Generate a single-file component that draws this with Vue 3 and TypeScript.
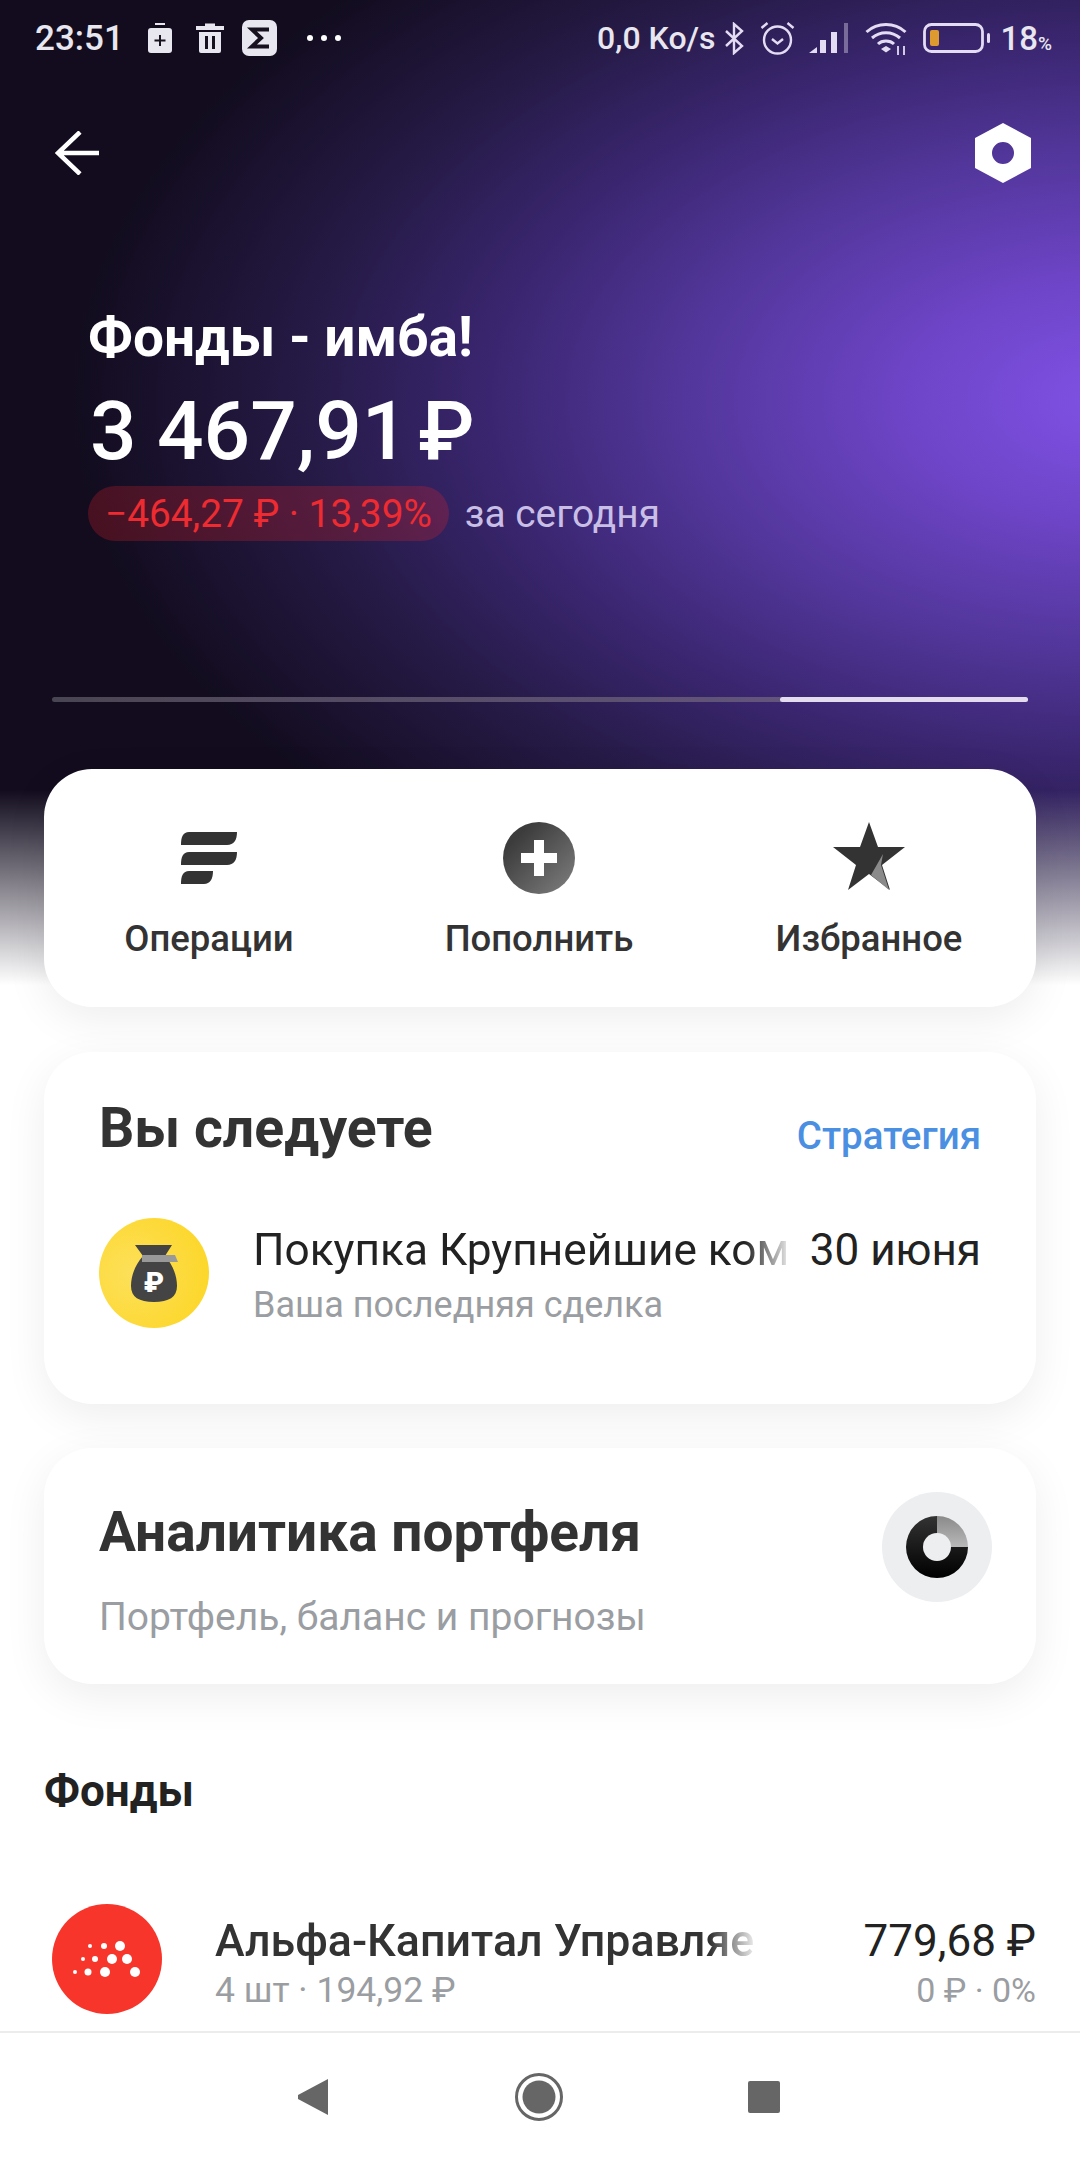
<template>
  <div class="screen">
    <div class="hero-bg"></div>

    <main class="content">
      <!-- status bar -->
      <header class="status">
        <div class="status-left">
          <span class="clock">23:51</span>
          <svg class="st-ic" width="24" height="30" viewBox="0 0 24 30">
            <rect x="7" y="0" width="10" height="2" fill="#e8e6ee" />
            <rect x="0" y="5" width="24" height="25" rx="3" fill="#e8e6ee" />
            <path d="M12 12v11M6.500 17.500h11" stroke="#16101f" stroke-width="2" />
          </svg>
          <svg class="st-ic" width="28" height="30" viewBox="0 0 28 30">
            <path d="M9 3V0.500h10V3h9v4H0V3zM3 9h22v19a2 2 0 0 1-2 2H5a2 2 0 0 1-2-2z" fill="#e8e6ee" />
            <path d="M10.500 13v13M17.500 13v13" stroke="#16101f" stroke-width="3" />
          </svg>
          <svg class="sigma" width="35" height="36" viewBox="0 0 35 36">
            <rect width="35" height="36" rx="7" fill="#e8e6ee" />
            <path d="M27 9.500H10l9 8.500-9 8.500h17" fill="none" stroke="#16101f" stroke-width="4" />
          </svg>
          <div class="dots"><i></i><i></i><i></i></div>
        </div>
        <div class="status-right">
          <span class="speed">0,0 Ko/s</span>
          <svg width="20" height="33" viewBox="0 0 20 33">
            <path d="M2 9l16 15-8 7V2l8 7L2 24" fill="none" stroke="#e3dcf2" stroke-width="2.400" />
          </svg>
          <svg class="alarm" width="35" height="34" viewBox="0 0 35 34">
            <circle cx="17.500" cy="19" r="13.500" fill="none" stroke="#e3dcf2" stroke-width="2.400" />
            <path d="M12 18l5.500 4.500L23 18" fill="none" stroke="#e3dcf2" stroke-width="2.400" />
            <path d="M1.500 7l6-5M33.500 7l-6-5" stroke="#e3dcf2" stroke-width="2.400" />
          </svg>
          <svg class="signal" width="40" height="30" viewBox="0 0 40 30">
            <path d="M0 30l8-6v6zM11 17h6v13h-6zM22 9h6v21h-6z" fill="#e3dcf2" />
            <path d="M35 0h4v30h-4z" fill="#e3dcf2" opacity=".4" />
          </svg>
          <svg class="wifi" width="43" height="33" viewBox="0 0 43 33">
            <path d="M1.500 10c11-10 28-10 39 0M7 16c8-7 20-7 28 0M13 22c4-4 12-4 16 0" fill="none" stroke="#e3dcf2" stroke-width="3" />
            <path d="M16 27l5-3 5 3-5 3.500z" fill="#e3dcf2" />
            <path d="M33 24v9M39 24v9" stroke="#e3dcf2" stroke-width="1.800" />
          </svg>
          <svg class="batt" width="67" height="30" viewBox="0 0 67 30">
            <rect x="1.500" y="1.500" width="58" height="27" rx="7" fill="none" stroke="#e3dcf2" stroke-width="2.800" />
            <rect x="7" y="7" width="9" height="16" rx="2" fill="#dd9a2e" />
            <rect x="64" y="10" width="3" height="10" rx="1.500" fill="#e3dcf2" />
          </svg>
          <span class="level">18<small>%</small></span>
        </div>
      </header>

      <!-- back / settings -->
      <nav class="topbar">
        <svg width="44" height="44" viewBox="0 0 44 44">
          <path d="M44 22H3M25 1L3 22l22 21" fill="none" stroke="#fff" stroke-width="4.500" />
        </svg>
        <svg width="56" height="60" viewBox="0 0 56 60">
          <path fill-rule="evenodd" d="M28 0l28 15v30L28 60 0 45V15zM28 19a11 11 0 1 0 0 22 11 11 0 0 0 0-22z" fill="#fff" />
        </svg>
      </nav>

      <!-- balance -->
      <section class="balance">
        <h1>Фонды - имба!</h1>
        <div class="amount">3 467,91<span class="rub">₽</span></div>
        <div class="change">
          <span class="pill">−464,27 ₽ · 13,39%</span>
          <span class="today">за сегодня</span>
        </div>
      </section>

      <div class="progress"><div class="progress-on"></div></div>

      <!-- quick actions -->
      <section class="card actions">
        <div class="action">
          <div class="action-ic">
            <svg width="56" height="52" viewBox="0 0 56 52">
              <path d="M8 0h48c0 8-3 13-10 13H0C0 5 2 0 8 0zM8 20h48c0 8-3 13-10 13H0c0-8 2-13 8-13zM8 39h24c0 8-3 13-9 13H0c0-8 2-13 8-13z" fill="#333" />
            </svg>
          </div>
          <span>Операции</span>
        </div>
        <div class="action">
          <div class="action-ic">
            <svg width="72" height="72" viewBox="0 0 72 72">
              <defs>
                <linearGradient id="plusFill" x1="0" y1="0" x2="1" y2="1">
                  <stop offset="0.200" stop-color="#3c3c3c" />
                  <stop offset="1" stop-color="#808080" />
                </linearGradient>
              </defs>
              <circle cx="36" cy="36" r="36" fill="url(#plusFill)" />
              <path d="M31 18h10v13h13v10H41v13H31V41H18V31h13z" fill="#fff" />
            </svg>
          </div>
          <span>Пополнить</span>
        </div>
        <div class="action">
          <div class="action-ic">
            <svg class="star" width="72" height="68" viewBox="0 0 72 68">
              <path d="M36 0l9 25h27L49 43l8 25-21-16-21 16 8-25L0 25h27z" fill="#333" />
              <path d="M50 32l-2 11 8 25-18-15z" fill="#8a8a8a" />
            </svg>
          </div>
          <span>Избранное</span>
        </div>
      </section>

      <!-- following -->
      <section class="card follow">
        <div class="follow-head">
          <h2>Вы следуете</h2>
          <a>Стратегия</a>
        </div>
        <div class="row">
          <div class="coin">
            <svg width="47" height="57" viewBox="0 0 47 57">
              <path d="M4 0h37l-7 11c8 9 12 20 12 30 0 11-8 16-23 16S0 52 0 41c0-10 4-21 12-30z" fill="#444" />
              <path d="M11 10h33l3 7H11z" fill="#999" />
              <text x="23" y="47" class="coin-sign">₽</text>
            </svg>
          </div>
          <div class="row-text">
            <div class="row-title fade">Покупка Крупнейшие ком</div>
            <div class="row-sub">Ваша последняя сделка</div>
          </div>
          <div class="row-date">30 июня</div>
        </div>
      </section>

      <!-- analytics -->
      <section class="card analytics">
        <div>
          <h2>Аналитика портфеля</h2>
          <p>Портфель, баланс и прогнозы</p>
        </div>
        <div class="donut-wrap">
          <svg width="62" height="62" viewBox="0 0 62 62">
            <defs>
              <linearGradient id="dn" x1="0" y1="0" x2="0" y2="1">
                <stop offset="0" stop-color="#333" />
                <stop offset="1" stop-color="#000" />
              </linearGradient>
              <linearGradient id="dg" x1="0" y1="0" x2="0" y2="1">
                <stop offset="0" stop-color="#8a8a8a" />
                <stop offset="1" stop-color="#b8b8b8" />
              </linearGradient>
            </defs>
            <path fill-rule="evenodd" d="M31 0v31h31A31 31 0 1 1 31 0z" fill="url(#dn)" />
            <path d="M31 0a31 31 0 0 1 31 31H31z" fill="url(#dg)" />
            <circle cx="31" cy="31" r="14" fill="#eceef0" />
          </svg>
        </div>
      </section>

      <h3 class="list-title">Фонды</h3>

      <div class="fund">
        <svg class="fund-logo" width="110" height="110" viewBox="0 0 110 110">
          <circle cx="55" cy="55" r="55" fill="#f8352a" />
          <g fill="#fff">
            <circle v-for="(d, i) in logoDots" :key="i" :cx="d[0]" :cy="d[1]" :r="d[2]" />
          </g>
        </svg>
        <div class="fund-text">
          <div class="fund-name fade">Альфа-Капитал Управляе</div>
          <div class="fund-sub">4 шт · 194,92 ₽</div>
        </div>
        <div class="fund-right">
          <div class="fund-sum">779,68 ₽</div>
          <div class="fund-sub small">0 ₽ · 0%</div>
        </div>
      </div>
    </main>

    <!-- android nav -->
    <footer class="navbar">
      <svg width="32" height="36" viewBox="0 0 32 36">
        <path d="M31 0v36L1 20v-4z" fill="#666" />
      </svg>
      <svg width="48" height="48" viewBox="0 0 48 48">
        <circle cx="24" cy="24" r="22.500" fill="none" stroke="#666" stroke-width="3" />
        <circle cx="24" cy="24" r="16.500" fill="#666" />
      </svg>
      <svg width="32" height="32" viewBox="0 0 32 32">
        <rect width="32" height="32" rx="2" fill="#666" />
      </svg>
    </footer>
  </div>
</template>

<script setup lang="ts">
// x, y, radius of the dots in the fund logo
const logoDots: [number, number, number][] = [
  [38, 42, 2], [52, 42, 3], [68, 42, 5],
  [31, 55, 2], [43, 55, 3], [60, 55, 5], [75, 55, 5],
  [23, 68, 2], [36, 68, 3.500], [53, 68, 5], [83, 68, 5],
]
</script>

<style>
html,
body {
  margin: 0;
  background: #fff;
}
</style>

<style scoped>
.screen {
  position: relative;
  width: 1080px;
  height: 2160px;
  overflow: hidden;
  display: flex;
  flex-direction: column;
  background: #fff;
  font-family: Roboto, "Noto Sans", sans-serif;
  color: #333;
}

.hero-bg {
  position: absolute;
  top: 0;
  left: 0;
  width: 1080px;
  height: 1000px;
  background:
    linear-gradient(to bottom, rgba(255, 255, 255, 0) 790px, #fff 985px),
    radial-gradient(ellipse 1050px 600px at 1120px 400px, #8152e6 0%, #6e45c8 20%, #52369a 42%, #3a2670 60%, #251a45 78%, #120c1e 100%);
}

.content {
  position: relative;
  flex: 1;
  min-height: 0;
  overflow: hidden;
  display: flex;
  flex-direction: column;
}

/* status bar */
.status {
  height: 76px;
  padding: 0 28px 0 35px;
  display: flex;
  justify-content: space-between;
  align-items: center;
  color: #e8e6ee;
  font-weight: 500;
}

.status-left,
.status-right {
  display: flex;
  align-items: center;
}

.clock {
  font-size: 35px;
}

.st-ic {
  margin-left: 24px;
}

.sigma {
  margin-left: 18px;
}

.dots {
  display: flex;
  gap: 8px;
  margin-left: 30px;
}

.dots i {
  width: 6px;
  height: 6px;
  border-radius: 50%;
  background: #fff;
}

.speed {
  margin-right: 9px;
  font-size: 32px;
}

.alarm {
  margin-left: 16px;
}

.signal {
  margin-left: 14px;
}

.wifi {
  margin-left: 16px;
}

.batt {
  margin-left: 15px;
}

.level {
  margin-left: 10px;
  font-size: 33px;
}

.level small {
  font-size: 19px;
}

/* back + settings */
.topbar {
  height: 60px;
  margin-top: 47px;
  padding: 0 49px 0 55px;
  display: flex;
  justify-content: space-between;
  align-items: center;
}

/* balance */
.balance {
  margin-top: 124px;
  padding-left: 88px;
  color: #fff;
}

.balance h1 {
  margin: 0;
  font-size: 55px;
  line-height: 60px;
  font-weight: 700;
}

.amount {
  margin-top: 18px;
  margin-left: 2px;
  font-size: 82px;
  line-height: 92px;
  font-weight: 500;
  display: flex;
  align-items: baseline;
}

.rub {
  margin-left: 10px;
}

.change {
  margin-top: 9px;
  display: flex;
  align-items: center;
}

.pill {
  height: 55px;
  padding: 0 17px;
  display: flex;
  align-items: center;
  border-radius: 28px;
  background: rgba(224, 36, 44, 0.26);
  color: #ee2b30;
  font-size: 38.800px;
}

.today {
  margin-left: 16px;
  font-size: 38.800px;
  color: #c9bfe6;
}

.progress {
  margin: 156px 52px 0;
  height: 5px;
  border-radius: 3px;
  background: linear-gradient(to right, #4a4552, #6b5a8a);
  display: flex;
  justify-content: flex-end;
}

.progress-on {
  width: 248px;
  border-radius: 3px;
  background: #e2dcee;
}

/* cards */
.card {
  flex: none;
  width: 992px;
  margin: 0 44px;
  box-sizing: border-box;
  background: #fff;
  border-radius: 48px;
  box-shadow: 0 12px 44px rgba(0, 0, 0, 0.07);
}

.actions {
  margin-top: 67px;
  height: 238px;
  padding-top: 53px;
  display: grid;
  grid-template-columns: repeat(3, 330px);
  align-items: start;
}

.action {
  display: flex;
  flex-direction: column;
  align-items: center;
  font-size: 36.500px;
  font-weight: 500;
  white-space: nowrap;
}

.action-ic {
  height: 72px;
  display: flex;
  align-items: center;
  margin-bottom: 23px;
}

.star {
  margin-top: -4px;
}

.follow {
  margin-top: 45px;
  height: 352px;
  padding: 47px 55px 0 55px;
}

.follow-head {
  display: flex;
  justify-content: space-between;
  align-items: center;
}

.follow-head h2 {
  margin: 0;
  font-size: 55.400px;
  line-height: 60px;
  font-weight: 700;
}

.follow-head a {
  font-size: 38.500px;
  font-weight: 500;
  color: #4a8fe2;
  margin-top: 12px;
}

.row {
  margin-top: 59px;
  display: flex;
  align-items: center;
}

.coin {
  flex: none;
  width: 110px;
  height: 110px;
  border-radius: 50%;
  display: flex;
  align-items: center;
  justify-content: center;
  background: radial-gradient(circle at 30% 50%, #fde05a, #fcd520);
}

.coin-sign {
  font-family: Roboto, sans-serif;
  font-size: 28px;
  font-weight: 900;
  fill: #fff;
  text-anchor: middle;
}

.row-text {
  margin-left: 44px;
  padding-top: 2px;
  min-width: 0;
}

.row-title {
  font-size: 44.200px;
  line-height: 52px;
  color: #222;
  white-space: nowrap;
}

.row-sub {
  margin-top: 9px;
  font-size: 36px;
  line-height: 40px;
  color: #9a9da1;
}

.row-date {
  margin-left: auto;
  margin-bottom: 46px;
  font-size: 44px;
  color: #222;
  white-space: nowrap;
}

.fade {
  width: fit-content;
  -webkit-mask-image: linear-gradient(to right, #000 calc(100% - 44px), rgba(0, 0, 0, 0.1) 100%);
  mask-image: linear-gradient(to right, #000 calc(100% - 44px), rgba(0, 0, 0, 0.1) 100%);
}

.analytics {
  margin-top: 44px;
  height: 236px;
  padding: 54px 44px 0 55px;
  display: flex;
  justify-content: space-between;
  align-items: flex-start;
}

.analytics h2 {
  margin: 0;
  font-size: 55px;
  line-height: 60px;
  font-weight: 700;
}

.analytics p {
  margin: 33px 0 0;
  font-size: 39px;
  line-height: 44px;
  color: #9a9da1;
}

.donut-wrap {
  width: 110px;
  height: 110px;
  margin-top: -10px;
  border-radius: 50%;
  background: #eceef0;
  display: flex;
  align-items: center;
  justify-content: center;
}

.list-title {
  margin: 83px 44px 0;
  font-size: 44px;
  line-height: 48px;
  font-weight: 700;
  color: #222;
}

.fund {
  margin-top: 89px;
  padding: 0 44px 0 52px;
  display: flex;
  align-items: center;
}

.fund-logo {
  flex: none;
}

.fund-text {
  margin-left: 53px;
  margin-top: 8px;
}

.fund-name {
  font-size: 44.700px;
  line-height: 52px;
  font-weight: 500;
  color: #333;
  white-space: nowrap;
}

.fund-sub {
  margin-top: 2px;
  font-size: 35.500px;
  line-height: 42px;
  color: #9a9da1;
}

.fund-sub.small {
  font-size: 34px;
}

.fund-right {
  margin-left: auto;
  margin-top: 8px;
  text-align: right;
}

.fund-sum {
  font-size: 44px;
  line-height: 52px;
  color: #222;
}

/* android nav */
.navbar {
  position: relative;
  flex: none;
  height: 129px;
  box-sizing: border-box;
  border-top: 2px solid #ececec;
  background: #fff;
  padding: 0 300px 0 297px;
  display: flex;
  justify-content: space-between;
  align-items: center;
}
</style>
